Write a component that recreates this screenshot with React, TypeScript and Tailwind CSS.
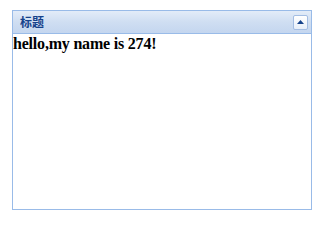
export default function App() {
  return (
    <div className="h-[232px] w-[326px] bg-white pl-3 pt-2.5">
      <div className="flex h-[200px] w-[300px] flex-col border border-[#99bbe8]">
        {/* Header */}
        <div className="flex h-[23px] items-center justify-between border-b border-[#99bbe8] bg-[linear-gradient(#e3ecf8,#cfdef2_50%,#c4d6ef)] pl-[7px] pr-[3px]">
          <span className="text-[12px] font-bold leading-none text-[#15428b] [font-family:'Noto_Sans_CJK_SC',sans-serif]">
            标题
          </span>
          <button className="flex h-[15px] w-[15px] items-center justify-center rounded-[2px] border border-[#a3bde3] bg-[linear-gradient(#ffffff,#e6eef9)]">
            <svg width="7" height="4" viewBox="0 0 7 4">
              <path d="M0 4 L3.5 0 L7 4 Z" fill="#15428b" />
            </svg>
          </button>
        </div>
        {/* Body */}
        <div className="flex-1 bg-white">
          <p className="text-[16px] font-bold leading-[19px] tracking-[-0.2px] text-black [font-family:'Liberation_Serif',serif]">
            hello,my name is 274!
          </p>
        </div>
      </div>
    </div>
  );
}
